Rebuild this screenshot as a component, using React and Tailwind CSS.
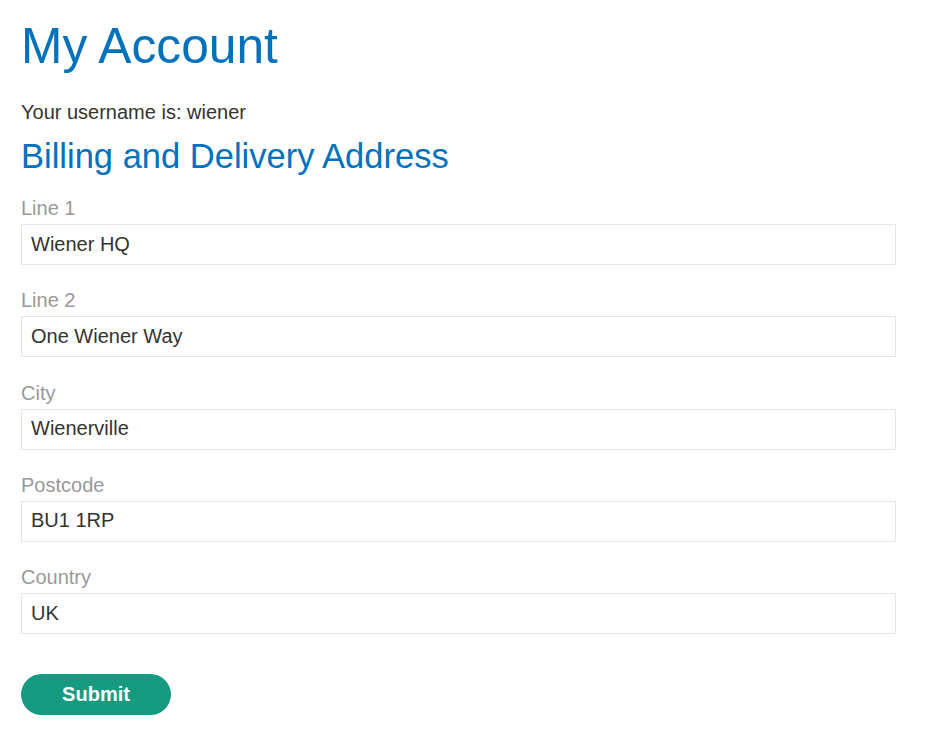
import React from "react";

const fields = [
  ["Line 1", "Wiener HQ"],
  ["Line 2", "One Wiener Way"],
  ["City", "Wienerville"],
  ["Postcode", "BU1 1RP"],
  ["Country", "UK"],
];

export default function App() {
  return (
    <div
      className="min-h-[742px] bg-white pl-[21px] text-[#333332]"
      style={{ fontFamily: '"Liberation Sans", Arial, sans-serif' }}
    >
      <h1 className="pt-[18px] text-[49.7px] leading-[56px] text-[#0071bc]">My Account</h1>
      <p className="mt-[26px] text-[20px] leading-[24px]">Your username is: wiener</p>
      <h2 className="mt-[12px] text-[34.5px] leading-[40px] text-[#0071bc]">Billing and Delivery Address</h2>
      <form className="mt-[20px] flex w-[875px] flex-col">
        {fields.map(([label, value], i) => (
          <div key={label} className={i === 0 ? "flex flex-col" : "mt-[23.3px] flex flex-col"}>
            <label className="text-[20px] leading-[24px] text-[#999999]">{label}</label>
            <input
              readOnly
              value={value}
              className="mt-[4px] h-[41px] w-full border border-[#e6e6e6] bg-white px-[9px] pb-[1px] text-[20px] text-[#333332] outline-none"
              style={{ fontFamily: '"Liberation Sans", Arial, sans-serif' }}
            />
          </div>
        ))}
        <button
          type="button"
          className="mt-[40px] flex h-[41px] w-[150px] items-center justify-center rounded-full bg-[#169b80] pb-[2px] text-[20px] font-bold text-white"
          style={{ fontFamily: '"Liberation Sans", Arial, sans-serif' }}
        >
          Submit
        </button>
      </form>
    </div>
  );
}
